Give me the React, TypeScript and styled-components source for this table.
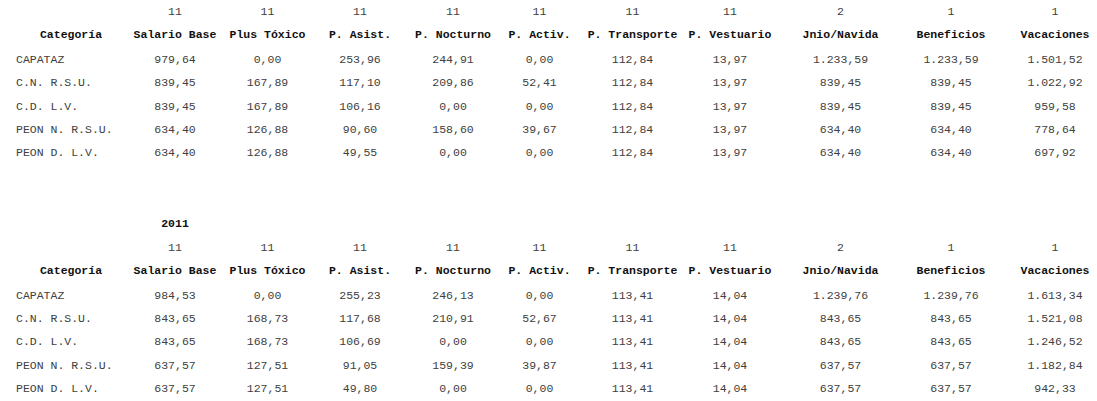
import styled, { createGlobalStyle } from "styled-components";

const GlobalStyle = createGlobalStyle`
  html, body {
    margin: 0;
    padding: 0;
    background: #fff;
  }

  body {
    font-family: "Liberation Mono", "Courier New", monospace;
    font-size: 11.5px;
    color: #404040;
  }
`;

// track widths and small nudges (px) so each column's text sits where the report has it
const TRACKS = "107px 98px 93px 92px 90px 90px 95px 104px 111px 107px 94px";
const NUDGE = [0, 6, 0, 0, 4, -3, -2, -6, 0, 3, 10];

const HEADERS = [
  "Salario Base",
  "Plus Tóxico",
  "P. Asist.",
  "P. Nocturno",
  "P. Activ.",
  "P. Transporte",
  "P. Vestuario",
  "Jnio/Navida",
  "Beneficios",
  "Vacaciones",
];

const COUNTS = ["11", "11", "11", "11", "11", "11", "11", "2", "1", "1"];

type RowData = { cat: string; values: string[] };

const TABLE_2010: RowData[] = [
  {
    cat: "CAPATAZ",
    values: ["979,64", "0,00", "253,96", "244,91", "0,00", "112,84", "13,97", "1.233,59", "1.233,59", "1.501,52"],
  },
  {
    cat: "C.N. R.S.U.",
    values: ["839,45", "167,89", "117,10", "209,86", "52,41", "112,84", "13,97", "839,45", "839,45", "1.022,92"],
  },
  {
    cat: "C.D. L.V.",
    values: ["839,45", "167,89", "106,16", "0,00", "0,00", "112,84", "13,97", "839,45", "839,45", "959,58"],
  },
  {
    cat: "PEON N. R.S.U.",
    values: ["634,40", "126,88", "90,60", "158,60", "39,67", "112,84", "13,97", "634,40", "634,40", "778,64"],
  },
  {
    cat: "PEON D. L.V.",
    values: ["634,40", "126,88", "49,55", "0,00", "0,00", "112,84", "13,97", "634,40", "634,40", "697,92"],
  },
];

const TABLE_2011: RowData[] = [
  {
    cat: "CAPATAZ",
    values: ["984,53", "0,00", "255,23", "246,13", "0,00", "113,41", "14,04", "1.239,76", "1.239,76", "1.613,34"],
  },
  {
    cat: "C.N. R.S.U.",
    values: ["843,65", "168,73", "117,68", "210,91", "52,67", "113,41", "14,04", "843,65", "843,65", "1.521,08"],
  },
  {
    cat: "C.D. L.V.",
    values: ["843,65", "168,73", "106,69", "0,00", "0,00", "113,41", "14,04", "843,65", "843,65", "1.246,52"],
  },
  {
    cat: "PEON N. R.S.U.",
    values: ["637,57", "127,51", "91,05", "159,39", "39,87", "113,41", "14,04", "637,57", "637,57", "1.182,84"],
  },
  {
    cat: "PEON D. L.V.",
    values: ["637,57", "127,51", "49,80", "0,00", "0,00", "113,41", "14,04", "637,57", "637,57", "942,33"],
  },
];

function SalaryTable({ title, rows }: { title?: string; rows: RowData[] }) {
  return (
    <Table>
      {title && (
        <Row $h={24}>
          <Cell />
          <Cell $nudge={NUDGE[1]} $bold>
            {title}
          </Cell>
        </Row>
      )}

      <Row $h={23}>
        <Cell />
        {COUNTS.map((c, i) => (
          <Cell key={i} $nudge={NUDGE[i + 1]}>
            {c}
          </Cell>
        ))}
      </Row>

      <Row $h={24}>
        <Cell $nudge={3} $bold>
          Categoría
        </Cell>
        {HEADERS.map((h, i) => (
          <Cell key={h} $nudge={NUDGE[i + 1]} $bold>
            {h}
          </Cell>
        ))}
      </Row>

      {rows.map((r) => (
        <Row key={r.cat} $h={23.33} $first={r === rows[0]}>
          <Cell $left>{r.cat}</Cell>
          {r.values.map((v, i) => (
            <Cell key={i} $nudge={NUDGE[i + 1]}>
              {v}
            </Cell>
          ))}
        </Row>
      ))}
    </Table>
  );
}

export default function App() {
  return (
    <>
      <GlobalStyle />
      <Page>
        <SalaryTable rows={TABLE_2010} />
        <SalaryTable title="2011" rows={TABLE_2011} />
      </Page>
    </>
  );
}

const Page = styled.div`
  width: 1097px;
  height: 401px;
  overflow: hidden;
  padding-left: 16px;
  box-sizing: border-box;
  display: flex;
  flex-direction: column;
  gap: 47px;
`;

const Table = styled.div`
  display: flex;
  flex-direction: column;
`;

const Row = styled.div<{ $h: number; $first?: boolean }>`
  display: grid;
  grid-template-columns: ${TRACKS};
  height: ${(p) => p.$h}px;
  line-height: ${(p) => p.$h}px;
  margin-top: ${(p) => (p.$first ? 1 : 0)}px;
  white-space: pre;
`;

const Cell = styled.div<{ $nudge?: number; $bold?: boolean; $left?: boolean }>`
  text-align: ${(p) => (p.$left ? "left" : "center")};
  padding-left: ${(p) => Math.max(p.$nudge ?? 0, 0)}px;
  padding-right: ${(p) => Math.max(-(p.$nudge ?? 0), 0)}px;
  font-weight: ${(p) => (p.$bold ? 700 : 400)};
  color: ${(p) => (p.$bold ? "#111" : "#404040")};
`;
